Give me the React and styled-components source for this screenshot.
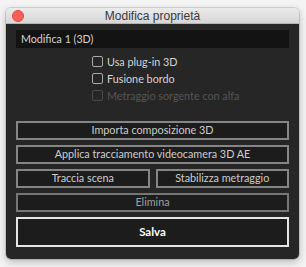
import React from "react";
import styled, { createGlobalStyle } from "styled-components";

const Global = createGlobalStyle`
  html, body {
    margin: 0;
    padding: 0;
    background: #f4f4f4;
  }
  body {
    font-family: Lato, "Open Sans", sans-serif;
  }
`;

const Page = styled.div`
  padding: 8px 7px 8px 6px;
`;

const Window = styled.div`
  width: 293px;
  height: 251px;
  border-radius: 5px;
  overflow: hidden;
  display: flex;
  flex-direction: column;
  box-shadow: 0 3px 8px rgba(0, 0, 0, 0.25), 0 0 0 1px rgba(0, 0, 0, 0.12);
`;

const TitleBar = styled.div`
  height: 16px;
  flex: none;
  position: relative;
  display: flex;
  align-items: center;
  justify-content: center;
  background: linear-gradient(#ebebeb, #d6d6d6);
  border-bottom: 1px solid #b4b4b4;
  box-sizing: border-box;
  font-family: "Liberation Sans", Arial, sans-serif;
  font-size: 12px;
  color: #3a3a3a;
`;

const Close = styled.span`
  position: absolute;
  left: 6px;
  top: 2px;
  width: 10px;
  height: 10px;
  border-radius: 50%;
  background: #fc5f57;
  border: 0.5px solid #de4a42;
`;

const Body = styled.div`
  flex: 1;
  background: #262626;
  padding: 6px 10px 0;
  display: flex;
  flex-direction: column;
`;

const Field = styled.div`
  height: 18px;
  background: #131313;
  color: #d2d2d2;
  font-size: 10.7px;
  line-height: 18px;
  padding-left: 5px;
`;

const Checks = styled.div`
  margin: 5px 0 0 76px;
  display: flex;
  flex-direction: column;
`;

const CheckRow = styled.label`
  height: 17px;
  display: flex;
  align-items: center;
  gap: 4px;
  font-size: 10.8px;
  color: ${(p) => (p.$disabled ? "#555" : "#d4d4d4")};
`;

const Box = styled.span`
  width: 9px;
  height: 9px;
  border: 1.5px solid ${(p) => (p.$disabled ? "#4a4a4a" : "#a8a8a8")};
  border-radius: 2px;
`;

const Buttons = styled.div`
  margin-top: 17px;
  display: flex;
  flex-direction: column;
  gap: 5px;
`;

const Row = styled.div`
  display: flex;
  gap: 6px;
`;

const Button = styled.button`
  flex: 1;
  height: ${(p) => (p.$primary ? "30px" : "19px")};
  padding: 0;
  background: #1c1c1c;
  border: 2px solid
    ${(p) => (p.$primary ? "#e6e6e6" : p.$dim ? "#767676" : "#858585")};
  color: ${(p) => (p.$primary ? "#fff" : p.$dim ? "#a0a0a0" : "#cdcdcd")};
  font-family: Lato, "Open Sans", sans-serif;
  font-size: ${(p) => (p.$primary ? "11.5px" : "10.8px")};
  font-weight: ${(p) => (p.$primary ? 700 : 400)};
  line-height: 1;
  box-sizing: border-box;
`;

export default function App() {
  return (
    <Page>
      <Global />
      <Window>
        <TitleBar>
          <Close />
          Modifica proprietà
        </TitleBar>
        <Body>
          <Field>Modifica 1 (3D)</Field>
          <Checks>
            <CheckRow>
              <Box />
              Usa plug-in 3D
            </CheckRow>
            <CheckRow>
              <Box />
              Fusione bordo
            </CheckRow>
            <CheckRow $disabled>
              <Box $disabled />
              Metraggio sorgente con alfa
            </CheckRow>
          </Checks>
          <Buttons>
            <Row>
              <Button>Importa composizione 3D</Button>
            </Row>
            <Row>
              <Button>Applica tracciamento videocamera 3D AE</Button>
            </Row>
            <Row>
              <Button>Traccia scena</Button>
              <Button>Stabilizza metraggio</Button>
            </Row>
            <Row>
              <Button $dim>Elimina</Button>
            </Row>
            <Row>
              <Button $primary>Salva</Button>
            </Row>
          </Buttons>
        </Body>
      </Window>
    </Page>
  );
}
